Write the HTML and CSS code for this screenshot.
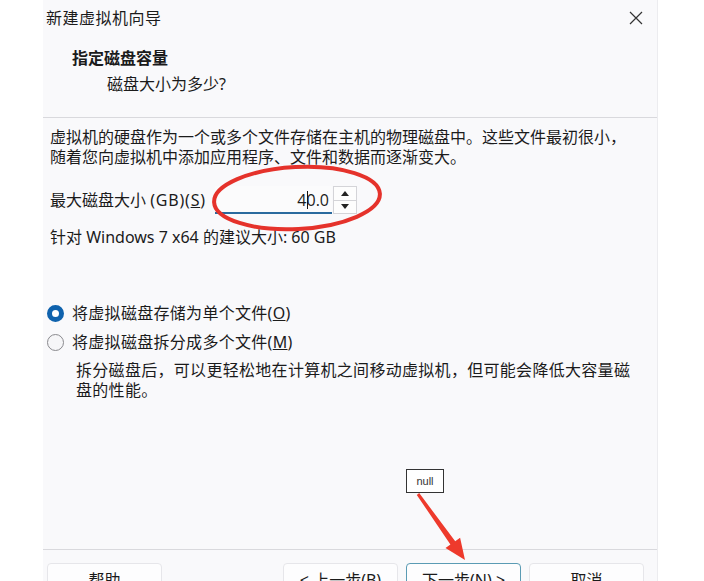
FILE: index.html
```html
<!DOCTYPE html>
<html lang="zh-CN">

<head>
  <meta charset="UTF-8">
  <meta name="viewport" content="width=device-width, initial-scale=1.0">
  <title>新建虚拟机向导</title>
  <link rel="stylesheet" href="styles.css">
</head>

<body>
  <div class="dialog">
    <div class="titlebar">
      <span class="title-text">新建虚拟机向导</span>
      <svg class="close-icon" width="14" height="14" viewBox="0 0 14 14">
        <path d="M1 1 L13 13 M13 1 L1 13" stroke="#333" stroke-width="1.2" fill="none" />
      </svg>
    </div>

    <div class="header">
      <div class="header-title">指定磁盘容量</div>
      <div class="header-sub">磁盘大小为多少?</div>
    </div>

    <div class="content">
      <p class="intro">
        虚拟机的硬盘作为一个或多个文件存储在主机的物理磁盘中。这些文件最初很小，<br>
        随着您向虚拟机中添加应用程序、文件和数据而逐渐变大。
      </p>

      <div class="size-row">
        <span class="size-label">最大磁盘大小 <span class="latin">(GB)(<u>S</u>)</span></span>
        <div class="spin-input">
          <div class="spin-field">4<span class="caret"></span>0.0</div>
          <div class="spin-buttons">
            <span class="spin-btn">
              <svg width="8" height="5" viewBox="0 0 8 5"><path d="M0 5 L4 0 L8 5 Z" fill="#222" /></svg>
            </span>
            <span class="spin-btn">
              <svg width="8" height="5" viewBox="0 0 8 5"><path d="M0 0 L8 0 L4 5 Z" fill="#222" /></svg>
            </span>
          </div>
        </div>
      </div>

      <p class="hint">针对 Windows 7 x64 的建议大小: 60 GB</p>

      <div class="options">
        <div class="radio-row">
          <span class="radio radio-checked"></span>
          <span>将虚拟磁盘存储为单个文件(<u>O</u>)</span>
        </div>
        <div class="radio-row">
          <span class="radio"></span>
          <span>将虚拟磁盘拆分成多个文件(<u>M</u>)</span>
        </div>
        <p class="option-desc">
          拆分磁盘后，可以更轻松地在计算机之间移动虚拟机，但可能会降低大容量磁<br>
          盘的性能。
        </p>
      </div>
    </div>

    <div class="footer">
      <button class="btn">帮助</button>
      <div class="footer-right">
        <button class="btn">&lt; 上一步(<u>B</u>)</button>
        <button class="btn btn-default">下一步(<u>N</u>) &gt;</button>
        <button class="btn">取消</button>
      </div>
    </div>
  </div>

  <!-- annotations drawn over the screenshot -->
  <svg class="annotations" width="704" height="581" viewBox="0 0 704 581">
    <ellipse cx="297" cy="198" rx="83" ry="31" transform="rotate(-3 297 198)" stroke="#e5322b" stroke-width="4" fill="none" />
    <polygon points="416.8,494.9 450.4,544.6 445.5,548.1 465,560 460.1,537.7 455.2,541.2 419.2,493.1" fill="#ee3a2c" />
  </svg>
  <div class="null-tag">null</div>
</body>

</html>
```

FILE: styles.css
```css
* {
  margin: 0;
  padding: 0;
  box-sizing: border-box;
}

body {
  font-family: 'Noto Sans', 'Noto Sans CJK SC', sans-serif;
  font-size: 16px;
  line-height: 20px;
  color: #1b1b1b;
  background: #ffffff;
  width: 704px;
  height: 581px;
  overflow: hidden;
  position: relative;
}

.dialog {
  margin-left: 43px;
  width: 615px;
  height: 581px;
  background: #f9f9fb;
  border-right: 1px solid #ececef;
}

.titlebar {
  height: 36px;
  display: flex;
  align-items: center;
  justify-content: space-between;
  padding: 0 14px 0 3px;
}

.title-text {
  letter-spacing: 0.5px;
}

.header {
  padding: 12px 0 23px 29px;
  border-bottom: 1px solid #d9d9dd;
}

.header-title {
  font-weight: 700;
}

.header-sub {
  margin-top: 6px;
  padding-left: 35px;
}

.content {
  height: 432px;
  padding: 9px 0 0 7px;
  border-bottom: 1px solid #d9d9dd;
}

.size-row {
  margin-top: 19px;
  display: flex;
  align-items: center;
  height: 28px;
}

.size-label {
  width: 165px;
}

.size-label .latin {
  letter-spacing: 0.8px;
}

.spin-input {
  display: flex;
  height: 28px;
}

.spin-field {
  width: 117px;
  height: 28px;
  padding: 4px 3px 0 0;
  text-align: right;
  background: #fbfbfc;
  border-bottom: 2px solid #2a6a9e;
  font-family: 'Open Sans', 'Noto Sans', sans-serif;
}

.caret {
  display: inline-block;
  width: 1px;
  height: 18px;
  background: #111;
  vertical-align: -3px;
  margin-right: -1px;
}

.spin-buttons {
  width: 24px;
  display: flex;
  flex-direction: column;
  margin-left: 1px;
}

.spin-btn {
  flex: 1;
  display: flex;
  align-items: center;
  justify-content: center;
  border: 1px solid #d4d4d8;
  background: #fdfdfd;
}

.spin-btn + .spin-btn {
  border-top: none;
}

.hint {
  margin-top: 13px;
}

.options {
  margin-top: 56px;
  letter-spacing: 0.3px;
}

.radio-row {
  display: flex;
  align-items: center;
  gap: 8px;
  margin-left: -3px;
  margin-bottom: 9px;
}

.radio {
  width: 17px;
  height: 17px;
  border-radius: 50%;
  border: 1px solid #8a8a8e;
  background: #f6f6f8;
}

.radio-checked {
  border: 5px solid #0f62ad;
  background: #ffffff;
}

.option-desc {
  margin-top: -1px;
  padding-left: 26px;
}

.footer {
  display: flex;
  justify-content: space-between;
  padding: 13px 13px 0 4px;
}

.footer-right {
  display: flex;
  gap: 8px;
}

.btn {
  font-family: 'Noto Sans', 'Noto Sans CJK SC', sans-serif;
  font-size: 16px;
  color: #1b1b1b;
  width: 115px;
  height: 32px;
  background: #fdfdfe;
  border: 1px solid #e6e6ea;
  border-radius: 4px;
}

.btn-default {
  border: 1px solid #5a9bb4;
}

.annotations {
  position: absolute;
  top: 0;
  left: 0;
  pointer-events: none;
}

.null-tag {
  position: absolute;
  left: 406px;
  top: 469px;
  width: 38px;
  height: 24px;
  border: 1px solid #333;
  background: #fff;
  font-family: 'Liberation Sans', sans-serif;
  font-size: 11px;
  line-height: 22px;
  text-align: center;
  color: #333;
}
```
